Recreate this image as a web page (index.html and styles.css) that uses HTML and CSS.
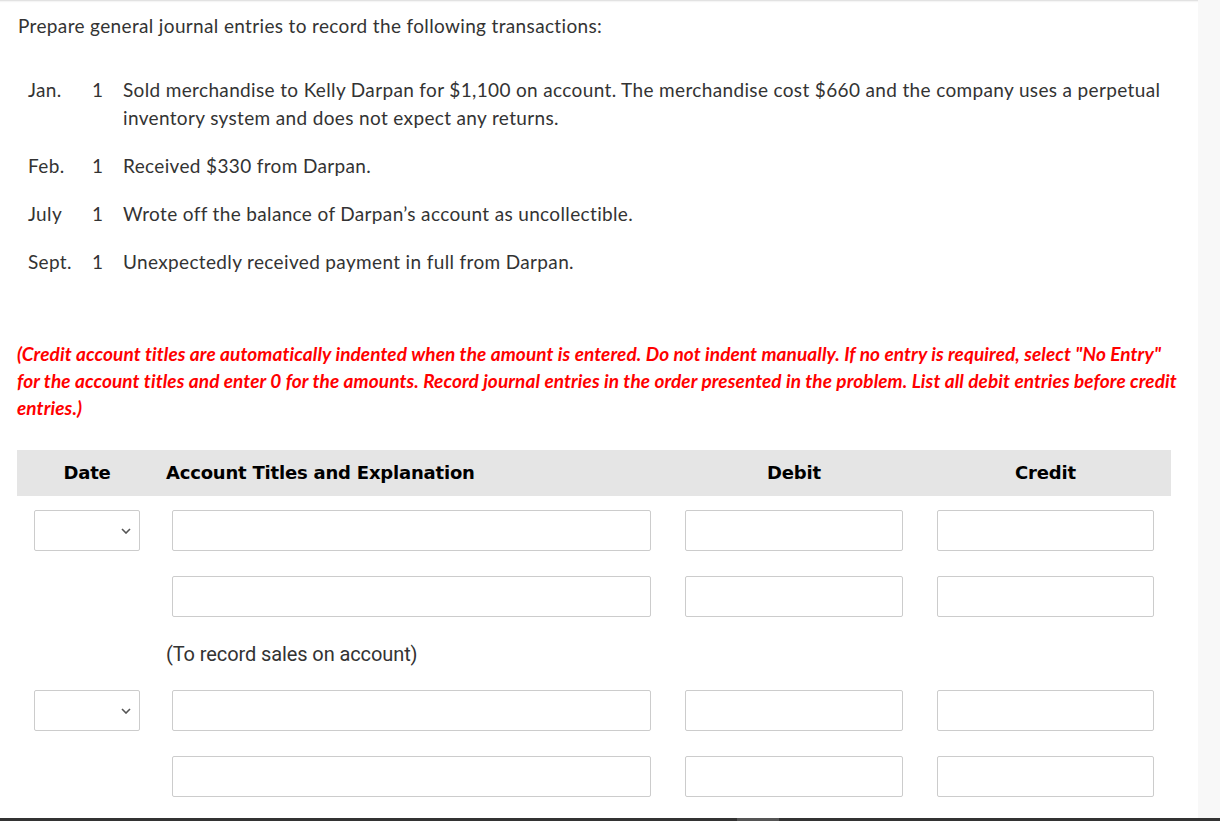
FILE: index.html
```html
<!DOCTYPE html>
<html>
<head>
<meta charset="utf-8">
<link rel="stylesheet" href="styles.css">
</head>
<body>
<div class="page">
  <main class="sheet">
    <p class="intro">Prepare general journal entries to record the following transactions:</p>

    <div class="txns">
      <div class="txn">
        <span class="mon">Jan.</span><span class="day">1</span>
        <span class="desc">Sold merchandise to Kelly Darpan for $1,100 on account. The merchandise cost $660 and the company uses a perpetual inventory system and does not expect any returns.</span>
      </div>
      <div class="txn">
        <span class="mon">Feb.</span><span class="day">1</span>
        <span class="desc">Received $330 from Darpan.</span>
      </div>
      <div class="txn">
        <span class="mon">July</span><span class="day">1</span>
        <span class="desc">Wrote off the balance of Darpan’s account as uncollectible.</span>
      </div>
      <div class="txn">
        <span class="mon">Sept.</span><span class="day">1</span>
        <span class="desc">Unexpectedly received payment in full from Darpan.</span>
      </div>
    </div>

    <p class="note">(Credit account titles are automatically indented when the amount is entered. Do not indent manually. If no entry is required, select "No Entry" for the account titles and enter 0 for the amounts. Record journal entries in the order presented in the problem. List all debit entries before credit entries.)</p>

    <div class="journal">
      <div class="jhead">
        <div class="h-date">Date</div>
        <div class="h-acct">Account Titles and Explanation</div>
        <div class="h-num">Debit</div>
        <div class="h-num">Credit</div>
      </div>

      <div class="jrow">
        <div class="c-date"><div class="sel"><svg class="chev" viewBox="0 0 10 6" width="10" height="6"><path d="M1 1 L5 5 L9 1" fill="none" stroke="#555" stroke-width="1.6"/></svg></div></div>
        <div class="c-acct"><div class="box"></div></div>
        <div class="c-num"><div class="box"></div></div>
        <div class="c-num"><div class="box"></div></div>
      </div>
      <div class="jrow">
        <div class="c-date"></div>
        <div class="c-acct"><div class="box"></div></div>
        <div class="c-num"><div class="box"></div></div>
        <div class="c-num"><div class="box"></div></div>
      </div>
      <div class="jexpl">(To record sales on account)</div>

      <div class="jrow">
        <div class="c-date"><div class="sel"><svg class="chev" viewBox="0 0 10 6" width="10" height="6"><path d="M1 1 L5 5 L9 1" fill="none" stroke="#555" stroke-width="1.6"/></svg></div></div>
        <div class="c-acct"><div class="box"></div></div>
        <div class="c-num"><div class="box"></div></div>
        <div class="c-num"><div class="box"></div></div>
      </div>
      <div class="jrow">
        <div class="c-date"></div>
        <div class="c-acct"><div class="box"></div></div>
        <div class="c-num"><div class="box"></div></div>
        <div class="c-num"><div class="box"></div></div>
      </div>
    </div>
  </main>
  <div class="bottombar"><span class="thumb"></span></div>
</div>
</body>
</html>
```

FILE: styles.css
```css
html, body {
  margin: 0;
  padding: 0;
  background: #f8f8f8;
  height: 100%;
  overflow: hidden;
}
.page {
  width: 1220px;
}
.sheet {
  width: 1198px;
  min-height: 821px;
  box-sizing: border-box;
  background: #fff;
  padding: 12px 0 0 17px;
  box-shadow: inset 0 3px 2px -2px #d8d8d8;
  font-family: Lato, "Open Sans", sans-serif;
  color: #333;
  font-size: 19px;
  letter-spacing: 0.35px;
  line-height: 28px;
}
.intro {
  margin: 0 0 36px 1px;
}
.txns {
  margin-left: 11px;
}
.txn {
  display: grid;
  grid-template-columns: 64px 31px 1045px;
  margin-bottom: 20px;
}
.desc {
  display: block;
}
.note {
  margin: 64px 0 29px 0;
  width: 1166px;
  color: #ff0000;
  font-style: italic;
  font-weight: 700;
  letter-spacing: 0.1px;
  line-height: 27px;
}
.journal {
  width: 1154px;
  letter-spacing: 0;
}
.jhead {
  display: grid;
  grid-template-columns: 140px 511px 252px 251px;
  height: 46px;
  align-items: center;
  background: #e5e5e5;
  font-family: "DejaVu Sans", Verdana, sans-serif;
  font-weight: 700;
  font-size: 18px;
  letter-spacing: -0.2px;
  color: #000;
}
.h-date { text-align: center; }
.h-acct { padding-left: 9px; }
.h-num { text-align: center; }
.jrow {
  display: grid;
  grid-template-columns: 140px 511px 252px 251px;
  height: 66px;
  box-sizing: border-box;
  padding-top: 14px;
  align-items: start;
}
.c-date { padding: 0 17px; }
.c-acct { padding: 0 17px 0 15px; }
.c-num { padding: 0 17px; }
.box, .sel {
  height: 41px;
  box-sizing: border-box;
  border: 1px solid #cccccc;
  border-radius: 2px;
  background: #fff;
}
.sel {
  display: flex;
  align-items: center;
  justify-content: flex-end;
  padding-right: 8px;
}
.jexpl {
  height: 48px;
  box-sizing: border-box;
  padding: 4px 0 0 149px;
  line-height: 44px;
  font-family: Roboto, "Liberation Sans", sans-serif;
  font-size: 20px;
  letter-spacing: -0.1px;
  color: #333;
}
.bottombar {
  position: fixed;
  left: 0;
  bottom: 0;
  width: 1220px;
  height: 3px;
  background: #333;
}
.thumb {
  position: absolute;
  left: 737px;
  top: 0;
  width: 42px;
  height: 3px;
  background: #555;
}
```
